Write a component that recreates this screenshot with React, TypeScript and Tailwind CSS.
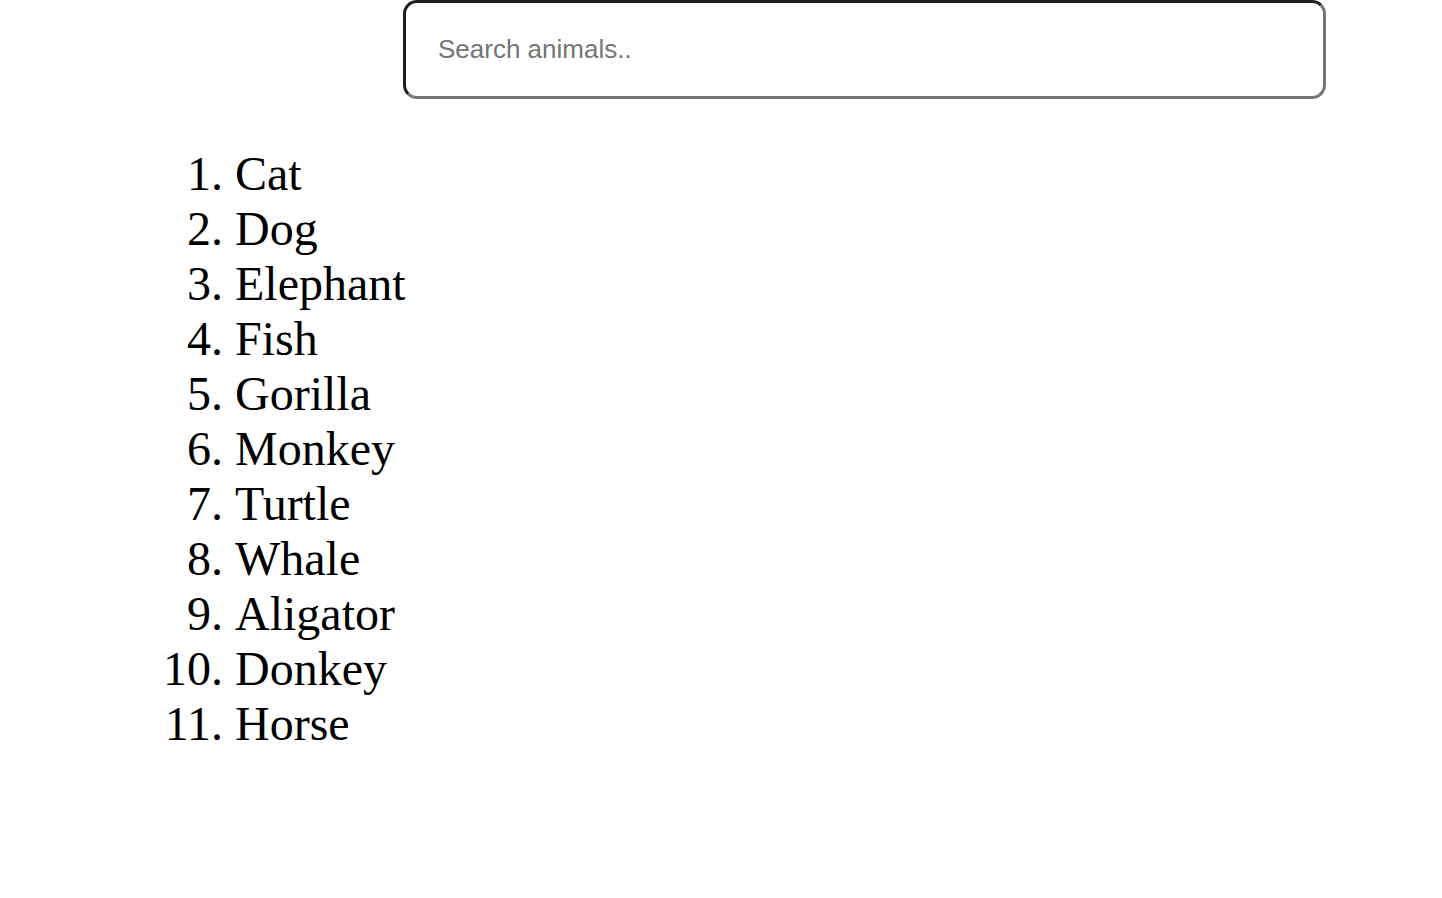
import { useState } from "react";

const animals = [
  "Cat",
  "Dog",
  "Elephant",
  "Fish",
  "Gorilla",
  "Monkey",
  "Turtle",
  "Whale",
  "Aligator",
  "Donkey",
  "Horse",
];

export default function App() {
  const [query, setQuery] = useState("");
  const filtered = animals.filter((a) => a.toLowerCase().includes(query.toLowerCase()));

  return (
    <div className="min-h-screen bg-white">
      <input
        type="text"
        value={query}
        onChange={(e) => setQuery(e.target.value)}
        placeholder="Search animals.."
        className="ml-[403px] block h-[99px] w-[923px] rounded-[14px] border-[3px] border-t-[#1f1f1f] border-l-[#1f1f1f] border-b-[#767676] border-r-[#767676] px-[32px] text-[26px] text-black outline-none placeholder:text-[#757575] font-['Liberation_Sans',Arial,sans-serif]"
      />
      <ol className="mt-[47px] list-decimal pl-[235px] text-[48px] leading-[55px] text-black font-['Liberation_Serif','Times_New_Roman',serif]">
        {filtered.map((animal) => (
          <li key={animal}>{animal}</li>
        ))}
      </ol>
    </div>
  );
}
